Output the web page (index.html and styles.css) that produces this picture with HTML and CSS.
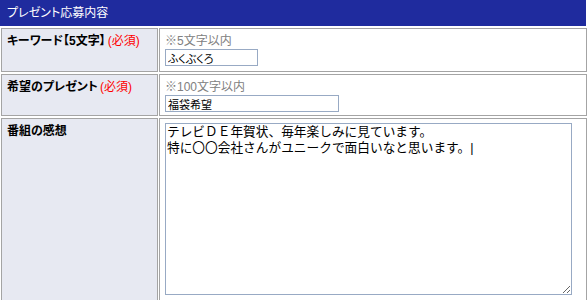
FILE: index.html
```html
<!DOCTYPE html>
<html lang="ja">
<head>
  <meta charset="UTF-8">
  <meta name="viewport" content="width=device-width, initial-scale=1.0">
  <title>プレゼント応募内容</title>
  <link rel="stylesheet" href="styles.css">
</head>
<body>
  <div class="form-box">
    <div class="form-title">プレゼント応募内容</div>

    <!-- キーワード -->
    <div class="form-row">
      <div class="label-cell">キーワード【5文字】<span class="required">(必須)</span></div>
      <div class="value-cell">
        <div class="note">※5文字以内</div>
        <input type="text" class="input-keyword" value="ふくぶくろ">
      </div>
    </div>

    <!-- 希望のプレゼント -->
    <div class="form-row row-present">
      <div class="label-cell">希望のプレゼント<span class="required">(必須)</span></div>
      <div class="value-cell">
        <div class="note">※100文字以内</div>
        <input type="text" class="input-present" value="福袋希望">
      </div>
    </div>

    <!-- 番組の感想 -->
    <div class="form-row row-comment">
      <div class="label-cell">番組の感想</div>
      <div class="value-cell">
        <textarea class="comment">テレビＤＥ年賀状、毎年楽しみに見ています。
特に〇〇会社さんがユニークで面白いなと思います。|</textarea>
      </div>
    </div>
  </div>
</body>
</html>
```

FILE: styles.css
```css
body {
  font-family: "Liberation Sans", "Noto Sans CJK JP", sans-serif;
  font-size: 12px;
  margin: 0;
  padding: 0;
  background-color: #fff;
  color: #000;
}
.form-box {
  width: 587px;
}
.form-title {
  width: 579px;
  height: 26px;
  line-height: 26px;
  padding-left: 7px;
  background-color: #1f2b9e;
  color: #fff;
  font-feature-settings: "palt";
}
.form-row {
  display: grid;
  grid-template-columns: 157px 428px;
  column-gap: 1px;
  margin: 2px 0 0 1px;
}
.label-cell {
  border: 1px solid #a4a4a4;
  background-color: #e7e9f2;
  padding: 4px 5px;
  line-height: 16px;
  font-weight: bold;
  font-feature-settings: "palt";
}
.required {
  margin-left: 2px;
  color: #ff0000;
  font-weight: normal;
}
.value-cell {
  border: 1px solid #a4a4a4;
  padding: 4px 5px 5px;
  line-height: 16px;
}
.row-present .value-cell {
  padding-bottom: 3px;
}
.note {
  color: #808080;
}
.value-cell input {
  display: block;
  box-sizing: border-box;
  height: 17px;
  margin: 0;
  padding: 0 2px;
  border: 1px solid #98aac4;
  font-family: "Liberation Sans", "Noto Sans CJK JP", sans-serif;
  font-size: 11px;
  font-feature-settings: "palt";
  color: #000;
}
.input-keyword {
  width: 93px;
}
.input-present {
  width: 174px;
}
.comment {
  display: block;
  box-sizing: border-box;
  width: 407px;
  height: 172px;
  margin: 0;
  padding: 0 1px;
  border: 1px solid #98aac4;
  font-family: "Liberation Sans", "Noto Sans CJK JP", sans-serif;
  font-size: 12.7px;
  line-height: 16px;
  color: #000;
}
```
